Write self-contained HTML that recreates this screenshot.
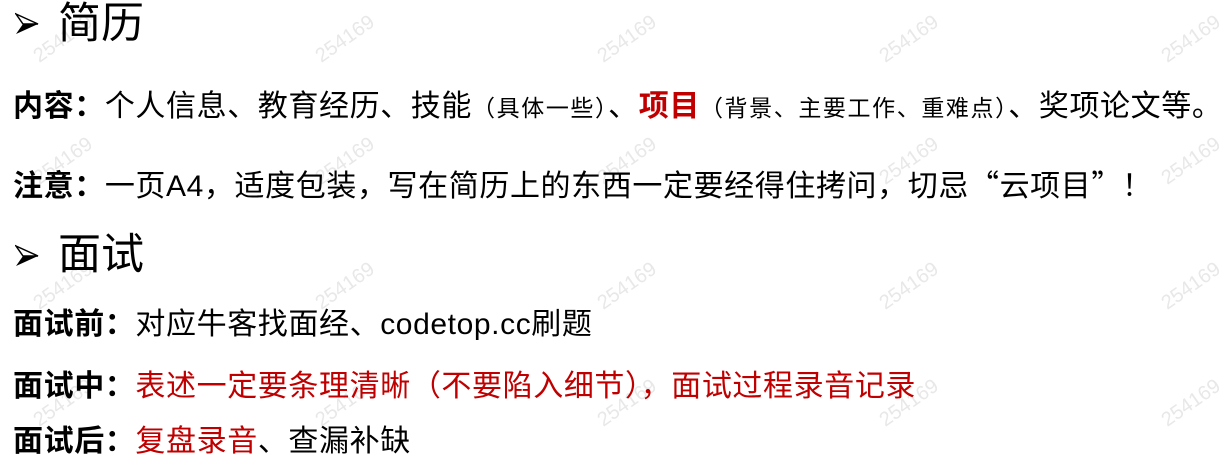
<!DOCTYPE html>
<html><head><meta charset="utf-8"><style>
body{margin:0;width:1229px;height:464px;background:#fff;overflow:hidden;position:relative;font-family:"Liberation Sans","Noto Sans CJK SC",sans-serif;color:#000}
.l{position:absolute;left:13px;white-space:nowrap;font-size:30px;line-height:34px;letter-spacing:0.6px}
.h{position:absolute;left:58px;font-size:43px;line-height:46px;white-space:nowrap}
.ar{position:absolute;left:15px;width:24px;height:24px}
b{font-weight:bold}
.r{color:#c00000}
.s{font-size:23px;letter-spacing:1.6px}
.c{font-family:"Noto Sans CJK SC",sans-serif}
.w{position:absolute;font-size:20px;color:#e8e8e8;transform:rotate(-35deg);font-family:"Liberation Sans",sans-serif;z-index:0}
.l,.h,.ar{z-index:1}
</style></head><body>
<div class="w" style="left:30px;top:28px">254169</div>
<div class="w" style="left:312px;top:28px">254169</div>
<div class="w" style="left:594px;top:28px">254169</div>
<div class="w" style="left:876px;top:28px">254169</div>
<div class="w" style="left:1158px;top:28px">254169</div>
<div class="w" style="left:30px;top:150px">254169</div>
<div class="w" style="left:312px;top:150px">254169</div>
<div class="w" style="left:594px;top:150px">254169</div>
<div class="w" style="left:876px;top:150px">254169</div>
<div class="w" style="left:1158px;top:150px">254169</div>
<div class="w" style="left:30px;top:275px">254169</div>
<div class="w" style="left:312px;top:275px">254169</div>
<div class="w" style="left:594px;top:275px">254169</div>
<div class="w" style="left:876px;top:275px">254169</div>
<div class="w" style="left:1158px;top:275px">254169</div>
<div class="w" style="left:30px;top:392px">254169</div>
<div class="w" style="left:312px;top:392px">254169</div>
<div class="w" style="left:594px;top:392px">254169</div>
<div class="w" style="left:876px;top:392px">254169</div>
<div class="w" style="left:1158px;top:392px">254169</div>

<svg class="ar" style="top:12px" viewBox="0 0 24 24"><path d="M1 2 L23 12 L1 22 L8 12 Z" fill="#000"/><path d="M1 2 L23 12 L8 12 Z" fill="#fff" stroke="#000" stroke-width="1.5"/></svg>
<div class="h" style="top:1px">简历</div>
<div class="l" style="top:89px"><b>内容：</b>个人信息、教育经历、技能<span class="s c">（具体一些）</span>、<b class="r">项目</b><span class="s c">（背景、主要工作、重难点）</span>、奖项论文等。</div>
<div class="l" style="top:166px"><b>注意：</b>一页A4<span class="c">，</span>适度包装<span class="c">，</span>写在简历上的东西一定要经得住拷问<span class="c">，</span>切忌<span class="c">“</span>云项目<span class="c">”！</span></div>
<svg class="ar" style="top:244px" viewBox="0 0 24 24"><path d="M1 2 L23 12 L1 22 L8 12 Z" fill="#000"/><path d="M1 2 L23 12 L8 12 Z" fill="#fff" stroke="#000" stroke-width="1.5"/></svg>
<div class="h" style="top:232px">面试</div>
<div class="l" style="top:308px"><b>面试前：</b>对应牛客找面经、codetop.cc刷题</div>
<div class="l" style="top:366px"><b>面试中：</b><span class="r">表述一定要条理清晰<span class="c">（</span>不要陷入细节<span class="c">），</span>面试过程录音记录</span></div>
<div class="l" style="top:425px"><b>面试后：</b><span class="r">复盘录音</span>、查漏补缺</div>
</body></html>
